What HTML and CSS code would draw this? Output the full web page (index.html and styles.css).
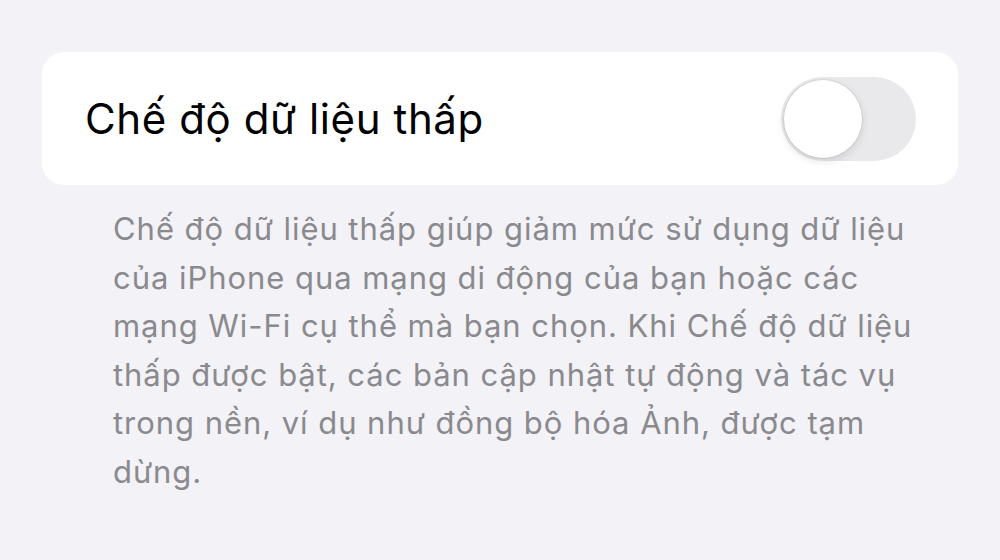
FILE: index.html
```html
<!DOCTYPE html>
<html lang="vi">
<head>
    <meta charset="UTF-8">
    <meta name="viewport" content="width=device-width, initial-scale=1.0">
    <title>Chế độ dữ liệu thấp</title>
    <link rel="stylesheet" href="styles.css">
</head>

<body>
    <div class="settings">
        <div class="cell">
            <span class="cell-label">Chế độ dữ liệu thấp</span>
            <label class="switch">
                <input type="checkbox">
                <span class="knob"></span>
            </label>
        </div>
        <p class="footer-note">Chế độ dữ liệu thấp giúp giảm mức sử dụng dữ liệu của iPhone qua mạng di động của bạn hoặc các mạng Wi-Fi cụ thể mà bạn chọn. Khi Chế độ dữ liệu thấp được bật, các bản cập nhật tự động và tác vụ trong nền, ví dụ như đồng bộ hóa Ảnh, được tạm dừng.</p>
    </div>
</body>
</html>
```

FILE: styles.css
```css
body {
    font-family: "Inter", "Noto Sans", sans-serif;
    background: #f2f2f7;
    margin: 0;
    padding: 52px 42px 0;
}

.settings {
    width: 916px;
}

.cell {
    background: white;
    border-radius: 22px;
    height: 133px;
    display: flex;
    align-items: center;
    justify-content: space-between;
    padding: 0 42px 0 43px;
    box-sizing: border-box;
}

.cell-label {
    font-size: 42px;
    color: #000;
    letter-spacing: 0.6px;
}

.switch {
    position: relative;
    width: 135px;
    height: 84px;
    display: block;
}

.switch input {
    display: none;
}

.knob {
    display: block;
    width: 100%;
    height: 100%;
    border-radius: 42px;
    background: #e9e9eb;
    position: relative;
}

/* white thumb sits over the track */
.knob::after {
    content: "";
    position: absolute;
    left: 3px;
    top: 3px;
    width: 78px;
    height: 78px;
    border-radius: 50%;
    background: white;
    box-shadow: 0 3px 8px rgba(0, 0, 0, 0.12), 0 0 0 1px rgba(0, 0, 0, 0.06);
}

.footer-note {
    width: 820px;
    margin: 20px 0 0 71px;
    font-size: 31px;
    line-height: 48.5px;
    letter-spacing: 0.95px;
    color: #8a8a8e;
}
```
